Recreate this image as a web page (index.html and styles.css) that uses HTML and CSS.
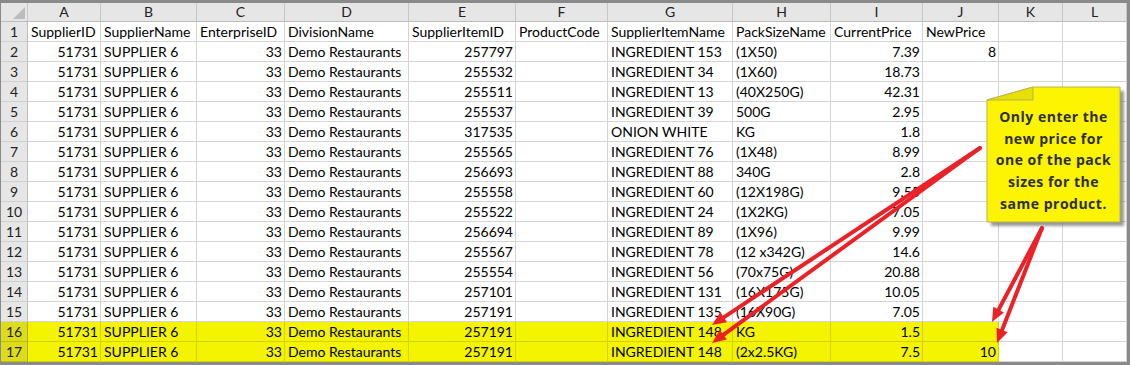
FILE: index.html
```html
<!DOCTYPE html>
<html>
<head>
<meta charset="utf-8">
<link rel="stylesheet" href="styles.css">
</head>
<body>
<div class="frame">
  <div class="sheet">
    <div class="row head">
      <div class="corner"><span class="tri"></span></div>
      <div class="ch">A</div><div class="ch">B</div><div class="ch">C</div><div class="ch">D</div>
      <div class="ch">E</div><div class="ch">F</div><div class="ch">G</div><div class="ch">H</div>
      <div class="ch">I</div><div class="ch">J</div><div class="ch">K</div><div class="ch">L</div>
    </div>
    <div class="row">
      <div class="rh">1</div>
      <div class="c">SupplierID</div><div class="c">SupplierName</div><div class="c">EnterpriseID</div><div class="c">DivisionName</div>
      <div class="c">SupplierItemID</div><div class="c">ProductCode</div><div class="c">SupplierItemName</div><div class="c">PackSizeName</div>
      <div class="c">CurrentPrice</div><div class="c">NewPrice</div><div class="c"></div><div class="c"></div>
    </div>
    <div class="row">
      <div class="rh">2</div>
      <div class="c r">51731</div><div class="c">SUPPLIER 6</div><div class="c r">33</div><div class="c">Demo Restaurants</div>
      <div class="c r">257797</div><div class="c"></div><div class="c">INGREDIENT 153</div><div class="c">(1X50)</div>
      <div class="c r">7.39</div><div class="c r">8</div><div class="c"></div><div class="c"></div>
    </div>
    <div class="row">
      <div class="rh">3</div>
      <div class="c r">51731</div><div class="c">SUPPLIER 6</div><div class="c r">33</div><div class="c">Demo Restaurants</div>
      <div class="c r">255532</div><div class="c"></div><div class="c">INGREDIENT 34</div><div class="c">(1X60)</div>
      <div class="c r">18.73</div><div class="c"></div><div class="c"></div><div class="c"></div>
    </div>
    <div class="row">
      <div class="rh">4</div>
      <div class="c r">51731</div><div class="c">SUPPLIER 6</div><div class="c r">33</div><div class="c">Demo Restaurants</div>
      <div class="c r">255511</div><div class="c"></div><div class="c">INGREDIENT 13</div><div class="c">(40X250G)</div>
      <div class="c r">42.31</div><div class="c"></div><div class="c"></div><div class="c"></div>
    </div>
    <div class="row">
      <div class="rh">5</div>
      <div class="c r">51731</div><div class="c">SUPPLIER 6</div><div class="c r">33</div><div class="c">Demo Restaurants</div>
      <div class="c r">255537</div><div class="c"></div><div class="c">INGREDIENT 39</div><div class="c">500G</div>
      <div class="c r">2.95</div><div class="c"></div><div class="c"></div><div class="c"></div>
    </div>
    <div class="row">
      <div class="rh">6</div>
      <div class="c r">51731</div><div class="c">SUPPLIER 6</div><div class="c r">33</div><div class="c">Demo Restaurants</div>
      <div class="c r">317535</div><div class="c"></div><div class="c">ONION WHITE</div><div class="c">KG</div>
      <div class="c r">1.8</div><div class="c"></div><div class="c"></div><div class="c"></div>
    </div>
    <div class="row">
      <div class="rh">7</div>
      <div class="c r">51731</div><div class="c">SUPPLIER 6</div><div class="c r">33</div><div class="c">Demo Restaurants</div>
      <div class="c r">255565</div><div class="c"></div><div class="c">INGREDIENT 76</div><div class="c">(1X48)</div>
      <div class="c r">8.99</div><div class="c"></div><div class="c"></div><div class="c"></div>
    </div>
    <div class="row">
      <div class="rh">8</div>
      <div class="c r">51731</div><div class="c">SUPPLIER 6</div><div class="c r">33</div><div class="c">Demo Restaurants</div>
      <div class="c r">256693</div><div class="c"></div><div class="c">INGREDIENT 88</div><div class="c">340G</div>
      <div class="c r">2.8</div><div class="c"></div><div class="c"></div><div class="c"></div>
    </div>
    <div class="row">
      <div class="rh">9</div>
      <div class="c r">51731</div><div class="c">SUPPLIER 6</div><div class="c r">33</div><div class="c">Demo Restaurants</div>
      <div class="c r">255558</div><div class="c"></div><div class="c">INGREDIENT 60</div><div class="c">(12X198G)</div>
      <div class="c r">9.55</div><div class="c"></div><div class="c"></div><div class="c"></div>
    </div>
    <div class="row">
      <div class="rh">10</div>
      <div class="c r">51731</div><div class="c">SUPPLIER 6</div><div class="c r">33</div><div class="c">Demo Restaurants</div>
      <div class="c r">255522</div><div class="c"></div><div class="c">INGREDIENT 24</div><div class="c">(1X2KG)</div>
      <div class="c r">7.05</div><div class="c"></div><div class="c"></div><div class="c"></div>
    </div>
    <div class="row">
      <div class="rh">11</div>
      <div class="c r">51731</div><div class="c">SUPPLIER 6</div><div class="c r">33</div><div class="c">Demo Restaurants</div>
      <div class="c r">256694</div><div class="c"></div><div class="c">INGREDIENT 89</div><div class="c">(1X96)</div>
      <div class="c r">9.99</div><div class="c"></div><div class="c"></div><div class="c"></div>
    </div>
    <div class="row">
      <div class="rh">12</div>
      <div class="c r">51731</div><div class="c">SUPPLIER 6</div><div class="c r">33</div><div class="c">Demo Restaurants</div>
      <div class="c r">255567</div><div class="c"></div><div class="c">INGREDIENT 78</div><div class="c">(12 x342G)</div>
      <div class="c r">14.6</div><div class="c"></div><div class="c"></div><div class="c"></div>
    </div>
    <div class="row">
      <div class="rh">13</div>
      <div class="c r">51731</div><div class="c">SUPPLIER 6</div><div class="c r">33</div><div class="c">Demo Restaurants</div>
      <div class="c r">255554</div><div class="c"></div><div class="c">INGREDIENT 56</div><div class="c">(70x75G)</div>
      <div class="c r">20.88</div><div class="c"></div><div class="c"></div><div class="c"></div>
    </div>
    <div class="row">
      <div class="rh">14</div>
      <div class="c r">51731</div><div class="c">SUPPLIER 6</div><div class="c r">33</div><div class="c">Demo Restaurants</div>
      <div class="c r">257101</div><div class="c"></div><div class="c">INGREDIENT 131</div><div class="c">(16X175G)</div>
      <div class="c r">10.05</div><div class="c"></div><div class="c"></div><div class="c"></div>
    </div>
    <div class="row">
      <div class="rh">15</div>
      <div class="c r">51731</div><div class="c">SUPPLIER 6</div><div class="c r">33</div><div class="c">Demo Restaurants</div>
      <div class="c r">257191</div><div class="c"></div><div class="c">INGREDIENT 135</div><div class="c">(16X90G)</div>
      <div class="c r">7.05</div><div class="c"></div><div class="c"></div><div class="c"></div>
    </div>
    <div class="row hl">
      <div class="rh">16</div>
      <div class="c r">51731</div><div class="c">SUPPLIER 6</div><div class="c r">33</div><div class="c">Demo Restaurants</div>
      <div class="c r">257191</div><div class="c"></div><div class="c">INGREDIENT 148</div><div class="c">KG</div>
      <div class="c r">1.5</div><div class="c"></div><div class="c nohl"></div><div class="c nohl"></div>
    </div>
    <div class="row hl">
      <div class="rh">17</div>
      <div class="c r">51731</div><div class="c">SUPPLIER 6</div><div class="c r">33</div><div class="c">Demo Restaurants</div>
      <div class="c r">257191</div><div class="c"></div><div class="c">INGREDIENT 148</div><div class="c">(2x2.5KG)</div>
      <div class="c r">7.5</div><div class="c r">10</div><div class="c nohl"></div><div class="c nohl"></div>
    </div>
  </div>

  <svg class="overlay" width="1130" height="365" viewBox="0 0 1130 365">
    <defs>
      <filter id="sh" x="-20%" y="-20%" width="140%" height="140%">
        <feGaussianBlur stdDeviation="1.5"/>
      </filter>
    </defs>
    <polygon points="991,104 1037,91 1124,91 1124,226 991,226" fill="#6b6b6b" opacity="0.7" filter="url(#sh)"/>
    <polygon points="987,100 1033,87 1120,87 1120,222 987,222" fill="#fcf400" stroke="#b8b35a" stroke-width="1"/>
    <polygon points="987,100 1033,87 1033,100" fill="#e8e000" stroke="#b8b35a" stroke-width="1"/>

    <g fill="#ec2128" stroke="none">
      <g stroke="#ec2128" stroke-width="4" stroke-linecap="round">
        <line x1="980" y1="148" x2="723.7" y2="317.3"/>
        <line x1="980" y1="148" x2="723.3" y2="334.8"/>
        <line x1="1042" y1="228" x2="998.6" y2="309.6"/>
        <line x1="1042" y1="228" x2="1002.1" y2="330.0"/>
      </g>
      <polygon points="712,325 720.4,312.3 727.0,322.3"/>
      <polygon points="712,343 719.8,329.9 726.9,339.6"/>
      <polygon points="992,322 993.3,306.8 1003.9,312.5"/>
      <polygon points="997,343 996.5,327.8 1007.7,332.2"/>
    </g>
  </svg>

  <div class="note">Only enter the<br>new price for<br>one of the pack<br>sizes for the<br>same product.</div>
</div>
</body>
</html>
```

FILE: styles.css
```css
html, body {
  margin: 0;
  padding: 0;
}
body {
  background: #8a8a8a;
  width: 1130px;
  height: 365px;
  overflow: hidden;
  font-family: Lato, "Liberation Sans", sans-serif;
}
.frame {
  position: relative;
  width: 1130px;
  height: 365px;
}
.sheet {
  position: relative;
  top: 3px;
  left: 1px;
  width: 1126px;
  background: #ffffff;
}
.row {
  display: grid;
  grid-template-columns: 27px 73px 96px 88px 124px 107px 92px 125px 98px 92px 76px 64px 64px;
  height: 20px;
}
.row > div {
  box-sizing: border-box;
  border-right: 1px solid #d4d4d4;
  border-bottom: 1px solid #d4d4d4;
  font-size: 14px;
  line-height: 20px;
  color: #000;
  white-space: nowrap;
  overflow: hidden;
}
.row.head {
  height: 19px;
}
.row.head > div {
  background: #e6e6e6;
  border-right-color: #c6c6c6;
  border-bottom-color: #bdbdbd;
  text-align: center;
  line-height: 17px;
  color: #222;
}
.corner {
  position: relative;
}
.corner .tri {
  position: absolute;
  right: 2px;
  bottom: 2px;
  width: 0;
  height: 0;
  border-left: 12px solid transparent;
  border-bottom: 12px solid #bcbcbc;
}
.rh {
  background: #e6e6e6;
  border-right-color: #bdbdbd !important;
  border-bottom-color: #d0d0d0 !important;
  text-align: center;
  color: #222 !important;
}
.c {
  padding: 0 2px 0 3px;
}
.c.r {
  text-align: right;
}
.row.hl > div {
  background: #f4f400;
  border-color: #d2d200;
}
.row.hl > .rh {
  background: #dcdc1c;
  border-right-color: #b0b000 !important;
  border-bottom-color: #c0c000 !important;
}
.row.hl > .nohl {
  background: #ffffff;
  border-color: #d4d4d4;
}
.overlay {
  position: absolute;
  top: 0;
  left: 0;
  pointer-events: none;
}
.note {
  position: absolute;
  left: 988px;
  top: 106px;
  width: 131px;
  text-align: center;
  font-family: "Open Sans", sans-serif;
  font-weight: bold;
  font-size: 14px;
  line-height: 21.7px;
  letter-spacing: 0.5px;
  color: #2e2e3a;
}
```
